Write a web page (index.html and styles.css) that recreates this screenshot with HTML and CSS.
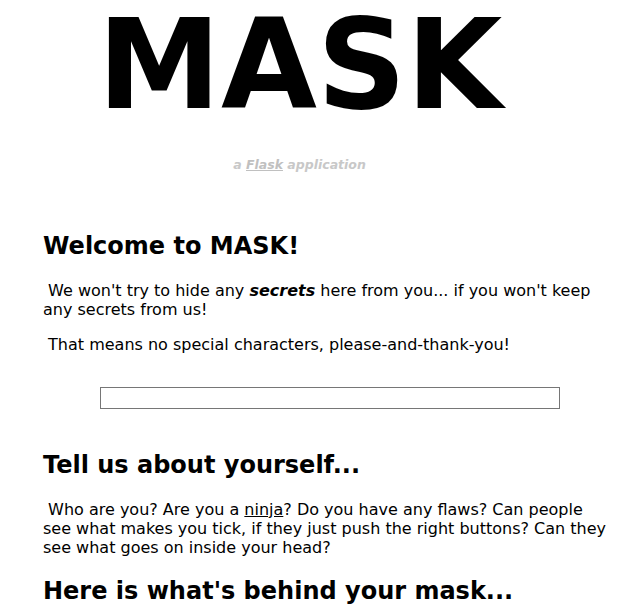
FILE: index.html
```html
<!DOCTYPE html>
<html>
<head>
<meta charset="utf-8">
<title>MASK</title>
<link rel="stylesheet" href="styles.css">
</head>
<body>
<header class="masthead">
  <h1 class="title">MASK</h1>
  <p class="subtitle">a <a href="#" class="subtitle-link">Flask</a> application</p>
</header>
<main class="content">
  <h2 class="heading">Welcome to MASK!</h2>
  <p class="text">&nbsp;We won't try to hide any <b><i>secrets</i></b> here from you... if you won't keep any secrets from us!</p>
  <p class="text">&nbsp;That means no special characters, please-and-thank-you!</p>
  <div class="field-row"><input class="field" type="text"></div>
  <h2 class="heading">Tell us about yourself...</h2>
  <p class="text">&nbsp;Who are you? Are you a <a href="#" class="plain-link">ninja</a>? Do you have any flaws? Can people see what makes you tick, if they just push the right buttons? Can they see what goes on inside your head?</p>
  <h2 class="heading">Here is what's behind your mask...</h2>
</main>
</body>
</html>
```

FILE: styles.css
```css
html, body {
  margin: 0;
  padding: 0;
  background: #fff;
  color: #000;
}
body {
  font-family: "DejaVu Sans", Verdana, sans-serif;
  font-size: 16px;
}
.masthead {
  text-align: center;
  padding: 0 19px 40px 0;
}
.title {
  margin: 0;
  padding-right: 10px;
  font-family: "DejaVu Sans", Verdana, sans-serif;
  font-weight: bold;
  font-size: 124px;
  line-height: 130px;
}
.subtitle {
  margin: 27px 0 0 0;
  padding-right: 11px;
  font-size: 12.5px;
  font-weight: bold;
  font-style: italic;
  color: #c8c8c8;
}
.subtitle-link {
  color: #c0c0c0;
}
.content {
  padding: 0 15px 0 43px;
}
.heading {
  font-size: 24px;
  font-weight: bold;
  line-height: 28px;
  margin: 20px 0 21px 0;
}
.text {
  margin: 16px 0;
  line-height: 19px;
}
.field-row {
  display: flex;
  padding: 17px 0 22px 57px;
}
.field {
  width: 460px;
  height: 22px;
  box-sizing: border-box;
  border: 1px solid #767676;
  margin: 0;
  padding: 0;
}
.plain-link {
  color: #000;
}
```
